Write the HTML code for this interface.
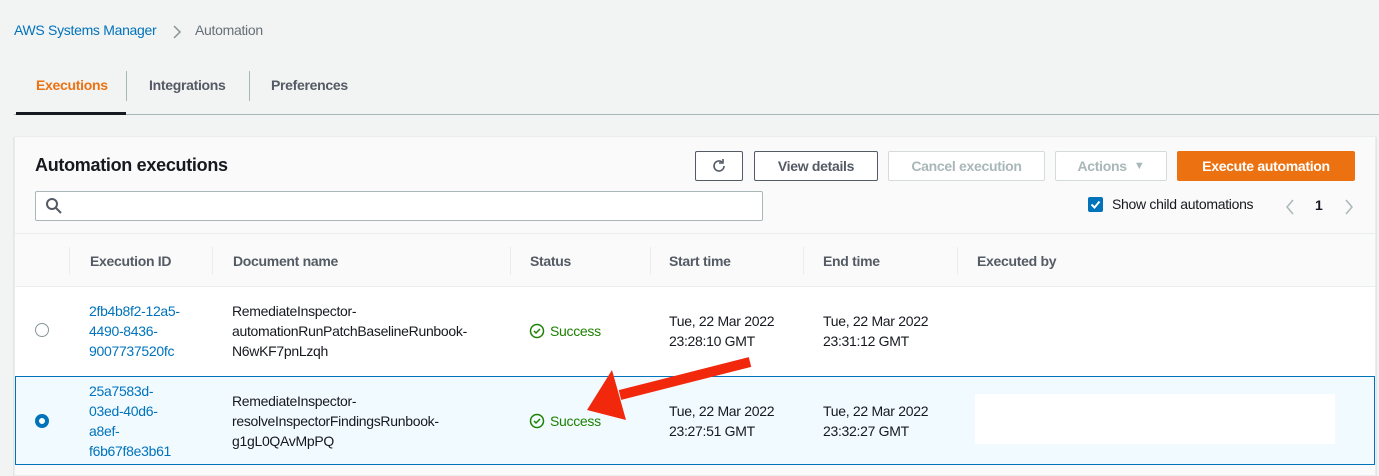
<!DOCTYPE html>
<html><head><meta charset="utf-8"><style>
*{box-sizing:border-box;margin:0;padding:0}
body{width:1379px;height:466px;overflow:hidden;background:#f2f3f3;font-family:"Liberation Sans",sans-serif;font-size:14px;color:#16191f;position:relative}
.a{position:absolute;white-space:nowrap}
.c{letter-spacing:-0.3px}
.btn{position:absolute;top:151px;height:30px;border:1px solid #545b64;border-radius:2px;background:#fff;font-weight:bold;font-size:14px;color:#545b64;display:flex;align-items:center;justify-content:center;letter-spacing:-0.3px}
.dis{border-color:#d5dbdb;color:#aab7b8}
.sep{position:absolute;width:1px;background:#eaeded;top:247px;height:28px}
.cell{position:absolute;line-height:20px;letter-spacing:-0.3px}
.link{color:#0073bb}
.ok{color:#1d8102}
</style></head><body>
<div class="a c" style="left:14px;top:22px;color:#0073bb">AWS Systems Manager</div>
<svg class="a" style="left:171px;top:24px" width="12" height="16"><path d="M3 2l6 6-6 6" fill="none" stroke="#879596" stroke-width="1.5"/></svg>
<div class="a c" style="left:195px;top:22px;color:#687078">Automation</div>

<div class="a c" style="left:36px;top:77px;color:#ec7211;font-weight:bold">Executions</div>
<div class="a" style="left:126px;top:71px;width:1px;height:30px;background:#aab7b8"></div>
<div class="a c" style="left:149px;top:77px;color:#545b64;font-weight:bold">Integrations</div>
<div class="a" style="left:249px;top:71px;width:1px;height:30px;background:#aab7b8"></div>
<div class="a c" style="left:271px;top:77px;color:#545b64;font-weight:bold">Preferences</div>
<div class="a" style="left:14px;top:114px;width:1365px;height:1px;background:#aab7b8"></div>
<div class="a" style="left:16px;top:112px;width:110px;height:3px;background:#16191f"></div>

<div class="a" style="left:14px;top:136px;width:1362px;height:340px;background:#fafafa;border:1px solid #eaeded;box-shadow:0 1px 1px rgba(0,28,36,.3)"></div>
<div class="a c" style="left:35px;top:155px;font-size:18px;font-weight:bold">Automation executions</div>
<div class="btn" style="left:695px;width:48px"><svg width="18" height="18" viewBox="0 0 18 18"><path d="M14 9a5 5 0 1 1-2-4" fill="none" stroke="#545b64" stroke-width="1.6"/><path d="M13 2v4h-4" fill="none" stroke="#545b64" stroke-width="1.6"/></svg></div>
<div class="btn" style="left:754px;width:124px">View details</div>
<div class="btn dis" style="left:888px;width:157px">Cancel execution</div>
<div class="btn dis" style="left:1055px;width:112px">Actions&nbsp;&nbsp;<span style="font-size:11px">▼</span></div>
<div class="btn" style="left:1177px;width:178px;background:#ec7211;border-color:#ec7211;color:#fff">Execute automation</div>

<div class="a" style="left:35px;top:191px;width:728px;height:30px;background:#fff;border:1px solid #aab7b8;border-radius:2px"></div>
<svg class="a" style="left:45px;top:197px" width="18" height="18"><circle cx="7" cy="7" r="5" fill="none" stroke="#545b64" stroke-width="2"/><path d="M11 11l5 5" stroke="#545b64" stroke-width="2"/></svg>

<div class="a" style="left:1088px;top:197px;width:15px;height:15px;background:#0073bb;border-radius:2px"></div>
<svg class="a" style="left:1088px;top:197px" width="15" height="15"><path d="M3.5 7.5l3 3 5-6" fill="none" stroke="#fff" stroke-width="2"/></svg>
<div class="a c" style="left:1112px;top:196px">Show child automations</div>
<svg class="a" style="left:1284px;top:198px" width="12" height="18"><path d="M9 2l-6 7 6 7" fill="none" stroke="#aab7b8" stroke-width="1.5"/></svg>
<div class="a" style="left:1315px;top:197px;font-weight:bold">1</div>
<svg class="a" style="left:1343px;top:198px" width="12" height="18"><path d="M3 2l6 7-6 7" fill="none" stroke="#aab7b8" stroke-width="1.5"/></svg>

<div class="a" style="left:15px;top:233px;width:1360px;height:1px;background:#eaeded"></div>
<div class="sep" style="left:69px"></div><div class="sep" style="left:212px"></div><div class="sep" style="left:510px"></div><div class="sep" style="left:650px"></div><div class="sep" style="left:803px"></div><div class="sep" style="left:957px"></div>
<div class="cell" style="left:90px;top:251px;font-weight:bold;color:#545b64">Execution ID</div>
<div class="cell" style="left:233px;top:251px;font-weight:bold;color:#545b64">Document name</div>
<div class="cell" style="left:530px;top:251px;font-weight:bold;color:#545b64">Status</div>
<div class="cell" style="left:669px;top:251px;font-weight:bold;color:#545b64">Start time</div>
<div class="cell" style="left:823px;top:251px;font-weight:bold;color:#545b64">End time</div>
<div class="cell" style="left:977px;top:251px;font-weight:bold;color:#545b64">Executed by</div>

<div class="a" style="left:15px;top:286px;width:1360px;height:91px;background:#fff;border-top:1px solid #eaeded"></div>
<div class="a" style="left:35px;top:323px;width:14px;height:14px;border-radius:50%;border:1px solid #879596;background:#fff"></div>
<div class="cell link" style="left:89px;top:301px">2fb4b8f2-12a5-<br>4490-8436-<br>9007737520fc</div>
<div class="cell" style="left:232px;top:301px">RemediateInspector-<br>automationRunPatchBaselineRunbook-<br>N6wKF7pnLzqh</div>
<svg class="a" style="left:529px;top:323px" width="16" height="16"><circle cx="8" cy="8" r="6.5" fill="none" stroke="#1d8102" stroke-width="1.5"/><path d="M5 8l2 2 4-4" fill="none" stroke="#1d8102" stroke-width="1.5"/></svg>
<div class="cell ok" style="left:550px;top:321px">Success</div>
<div class="cell" style="left:669px;top:311px">Tue, 22 Mar 2022<br>23:28:10 GMT</div>
<div class="cell" style="left:823px;top:311px">Tue, 22 Mar 2022<br>23:31:12 GMT</div>

<div class="a" style="left:15px;top:376px;width:1360px;height:89px;background:#f1faff;border:1px solid #0073bb"></div>
<div class="a" style="left:35px;top:414px;width:14px;height:14px;border-radius:50%;border:4px solid #0073bb;background:#fff"></div>
<div class="cell link" style="left:89px;top:381px">25a7583d-<br>03ed-40d6-<br>a8ef-<br>f6b67f8e3b61</div>
<div class="cell" style="left:232px;top:391px">RemediateInspector-<br>resolveInspectorFindingsRunbook-<br>g1gL0QAvMpPQ</div>
<svg class="a" style="left:529px;top:413px" width="16" height="16"><circle cx="8" cy="8" r="6.5" fill="none" stroke="#1d8102" stroke-width="1.5"/><path d="M5 8l2 2 4-4" fill="none" stroke="#1d8102" stroke-width="1.5"/></svg>
<div class="cell ok" style="left:550px;top:411px">Success</div>
<div class="cell" style="left:669px;top:401px">Tue, 22 Mar 2022<br>23:27:51 GMT</div>
<div class="cell" style="left:823px;top:401px">Tue, 22 Mar 2022<br>23:32:27 GMT</div>
<div class="a" style="left:975px;top:394px;width:360px;height:50px;background:#fff"></div>

<svg class="a" style="left:0;top:0" width="1379" height="466"><path d="M750 362L620 395" stroke="#f2280c" stroke-width="10" stroke-linecap="butt"/><path d="M587 410L612 370L626 420Z" fill="#f2280c"/></svg>
</body></html>
